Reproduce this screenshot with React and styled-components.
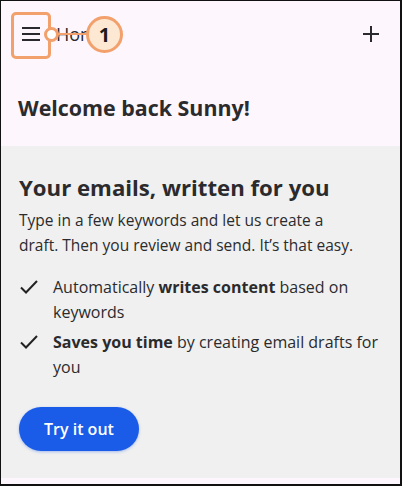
import styled, { createGlobalStyle } from "styled-components";

const GlobalStyle = createGlobalStyle`
  * { box-sizing: border-box; }
  body {
    margin: 0;
    background: #ffffff;
    font-family: "Open Sans", "Noto Sans", sans-serif;
  }
`;

const Frame = styled.div`
  position: relative;
  width: 402px;
  height: 486px;
  border: 2px solid #111;
  border-top-width: 1px;
  border-left-width: 1px;
  background: #fdf6fd;
  display: flex;
  flex-direction: column;
  overflow: hidden;
  color: #2b2b2d;
`;

const TopBar = styled.div`
  height: 65px;
  display: flex;
  align-items: center;
  padding: 0 20px 0 20px;
  gap: 15px;
`;

const IconButton = styled.button`
  border: 0;
  background: none;
  padding: 0;
  display: flex;
  align-items: center;
  justify-content: center;
  color: #2a2a2e;
  cursor: pointer;
`;

const BarTitle = styled.span`
  font-size: 18px;
  flex: 1;
`;

const Welcome = styled.div`
  height: 80px;
  display: flex;
  align-items: center;
  padding: 3px 17px 0;
  font-size: 21.4px;
  font-weight: 700;
`;

const Promo = styled.section`
  flex: 1;
  background: #f0f0f0;
  padding: 26px 18px 0;
`;

const Heading = styled.h2`
  margin: 0 0 4px;
  font-size: 22.2px;
  line-height: 32px;
  font-weight: 700;
`;

const Lead = styled.p`
  margin: 0 0 17px;
  font-size: 15.5px;
  line-height: 25px;
  white-space: nowrap;
`;

const List = styled.ul`
  list-style: none;
  margin: 0;
  padding: 0;
  display: flex;
  flex-direction: column;
  gap: 5px;
`;

const Item = styled.li`
  display: flex;
  gap: 14px;
  font-size: 16px;
  line-height: 25px;
  b { font-weight: 700; }
`;

const Check = styled.svg`
  flex: none;
  margin-top: 4px;
`;

const PrimaryButton = styled.button`
  margin-top: 27px;
  height: 44px;
  padding: 0 25px;
  border: 0;
  border-radius: 22px;
  background: #1a5ce8;
  color: #fff;
  font-family: inherit;
  font-size: 16px;
  font-weight: 600;
  box-shadow: 0 1px 3px rgba(26, 92, 232, 0.35);
`;

const Footer = styled.div`
  height: 6px;
  background: #fdf6fd;
`;

/* callout overlay */
const Highlight = styled.div`
  position: absolute;
  left: 10px;
  top: 11px;
  width: 40px;
  height: 47px;
  border: 3px solid #f2a16c;
  border-radius: 5px;
`;

const Dot = styled.div`
  position: absolute;
  left: 43px;
  top: 26px;
  width: 15px;
  height: 15px;
  border-radius: 50%;
  background: #fff;
  border: 3px solid #f2a16c;
`;

const Leader = styled.div`
  position: absolute;
  left: 57px;
  top: 32px;
  width: 30px;
  height: 2px;
  background: #f2a16c;
`;

const Badge = styled.div`
  position: absolute;
  left: 85px;
  top: 15px;
  width: 37px;
  height: 37px;
  border-radius: 50%;
  background: #fde8d4;
  border: 3px solid #f2a16c;
  display: flex;
  align-items: center;
  justify-content: center;
  font-size: 20px;
  font-weight: 700;
  color: #1b1b1b;
`;

export default function App() {
  return (
    <>
      <GlobalStyle />
      <Frame>
        <TopBar>
          <IconButton aria-label="menu">
            <svg width="20" height="16" viewBox="0 0 20 16">
              <path d="M1 2h18M1 8h18M1 14h18" stroke="currentColor" strokeWidth="2.2" />
            </svg>
          </IconButton>
          <BarTitle>Home</BarTitle>
          <IconButton aria-label="add">
            <svg width="18" height="18" viewBox="0 0 18 18">
              <path d="M9 1v16M1 9h16" stroke="currentColor" strokeWidth="2" />
            </svg>
          </IconButton>
        </TopBar>
        <Welcome>Welcome back Sunny!</Welcome>
        <Promo>
          <Heading>Your emails, written for you</Heading>
          <Lead>
            Type in a few keywords and let us create a
            <br />
            draft. Then you review and send. It’s that easy.
          </Lead>
          <List>
            <Item>
              <Check width="20" height="16" viewBox="0 0 20 16">
                <path d="M2 8.5l5 5L18 2" fill="none" stroke="#222" strokeWidth="2" />
              </Check>
              <span>
                Automatically <b>writes content</b> based on keywords
              </span>
            </Item>
            <Item>
              <Check width="20" height="16" viewBox="0 0 20 16">
                <path d="M2 8.5l5 5L18 2" fill="none" stroke="#222" strokeWidth="2" />
              </Check>
              <span>
                <b>Saves you time</b> by creating email drafts for you
              </span>
            </Item>
          </List>
          <PrimaryButton>Try it out</PrimaryButton>
        </Promo>
        <Footer />
        <Highlight />
        <Leader />
        <Dot />
        <Badge>1</Badge>
      </Frame>
    </>
  );
}
